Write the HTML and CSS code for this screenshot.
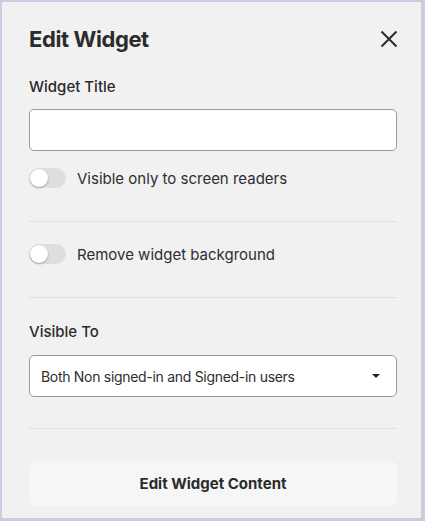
FILE: index.html
```html
<!DOCTYPE html>
<html>
<head>
	<title>Edit Widget</title>
	<link rel="stylesheet" href="styles.css">
</head>
<body>
	<div class="panel">
		<div class="header">
			<h2>Edit Widget</h2>
			<button class="close" aria-label="Close">
				<svg width="18" height="18" viewBox="0 0 18 18"><path d="M1.5 1.5 L16.5 16.5 M16.5 1.5 L1.5 16.5" stroke="#2b2b2b" stroke-width="2" fill="none"/></svg>
			</button>
		</div>

		<label class="fieldLabel" for="title">Widget Title</label>
		<input type="text" id="title" class="textInput">

		<label class="toggleRow first">
			<span class="toggle"><span class="knob"></span></span>
			<span>Visible only to screen readers</span>
		</label>

		<div class="divider"></div>

		<label class="toggleRow">
			<span class="toggle"><span class="knob"></span></span>
			<span>Remove widget background</span>
		</label>

		<div class="divider"></div>

		<label class="fieldLabel visible">Visible To</label>
		<div class="select">
			<span>Both Non signed-in and Signed-in users</span>
			<span class="caret"></span>
		</div>

		<div class="divider last"></div>

		<button class="editBtn">Edit Widget Content</button>
	</div>
</body>
</html>
```

FILE: styles.css
```css
*{
	padding: 0px;
	margin: 0px;
	box-sizing: border-box;
}
body{
	font-family: Inter, "Noto Sans", sans-serif;
	color: #2b2b2b;
	background: #cdcbdf;
}
.panel{
	height: 521px;
	border-style: solid;
	border-color: #cdcbdf;
	border-width: 2px 4px 3px 2px;
	background: #f1f1f1;
	padding: 23px 24px 0 27px;
	display: flex;
	flex-direction: column;
}
.header{
	display: flex;
	justify-content: space-between;
	align-items: center;
	height: 28px;
}
h2{
	font-size: 22px;
	font-weight: 700;
	line-height: 28px;
	letter-spacing: -0.4px;
}
.close{
	background: transparent;
	border: none;
	width: 18px;
	height: 18px;
	margin-right: -1px;
	display: flex;
}
.fieldLabel{
	font-size: 15px;
	font-weight: 500;
	line-height: 20px;
	margin-top: 24px;
}
.textInput{
	margin-top: 12px;
	height: 42px;
	width: 100%;
	border: 1px solid #9a9a9a;
	border-radius: 5px;
	background: #fff;
}
.toggleRow{
	display: flex;
	align-items: center;
	gap: 11px;
	height: 20px;
	margin-top: 22px;
	font-size: 15px;
	font-weight: 400;
	color: #2e2e2e;
}
.toggleRow.first{
	margin-top: 17px;
}
.toggle{
	width: 37px;
	height: 20px;
	border-radius: 10px;
	background: #dedede;
	position: relative;
	flex: none;
}
.knob{
	position: absolute;
	left: 1px;
	top: 1px;
	width: 18px;
	height: 18px;
	border-radius: 50%;
	background: #fff;
	box-shadow: 0 1px 2px rgba(0,0,0,0.3);
}
.divider{
	height: 1px;
	background: #e1e1e1;
	margin-top: 33px;
}
.select{
	margin-top: 13px;
	height: 42px;
	border: 1px solid #9a9a9a;
	border-radius: 5px;
	background: #fff;
	display: flex;
	align-items: center;
	justify-content: space-between;
	padding: 0 16px 0 11px;
	font-size: 14px;
	letter-spacing: -0.3px;
	color: #2e2e2e;
}
.caret{
	width: 0;
	height: 0;
	border-left: 4px solid transparent;
	border-right: 4px solid transparent;
	border-top: 4px solid #222;
}
.divider.last{
	margin-top: 31px;
}
.editBtn{
	margin-top: 32px;
	height: 45px;
	border: none;
	border-radius: 6px;
	background: #f6f6f6;
	font-family: Inter, "Noto Sans", sans-serif;
	font-size: 15px;
	font-weight: 700;
	color: #2b2b2b;
}
```
